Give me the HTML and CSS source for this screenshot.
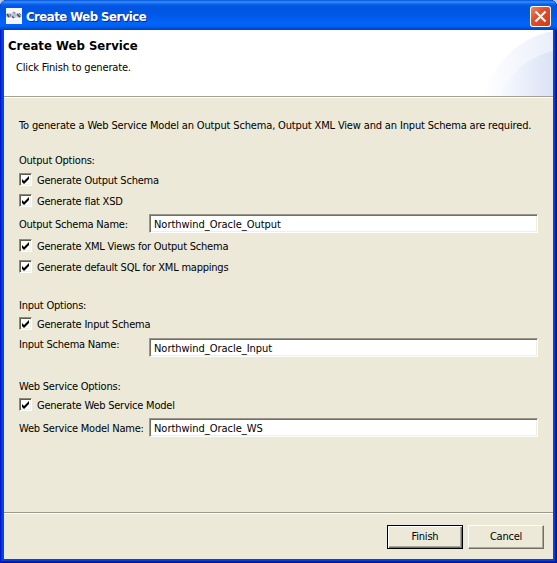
FILE: index.html
```
<!DOCTYPE html>
<html lang="en">
<head>
<meta charset="utf-8">
<title>Create Web Service</title>
<link rel="stylesheet" href="styles.css">
</head>
<body>
<div class="window">
  <div class="titlebar">
    <svg class="app-icon" width="16" height="16" viewBox="0 0 16 16">
      <rect width="16" height="16" fill="#f4f6fb"/>
      <ellipse cx="3" cy="7.500" rx="2.800" ry="2.200" fill="#aeb4c0"/>
      <ellipse cx="8" cy="7" rx="2.600" ry="3" fill="#bcc3d0"/>
      <ellipse cx="13" cy="7.500" rx="2.600" ry="2.200" fill="#aeb4c0"/>
      <path d="M1 6l2 3M6 8.500l2 1.500M11 6l3 3" stroke="#454e66" stroke-width="1.500"/>
      <path d="M7 4l2 1M4 6l1 2M13 5l2 2" stroke="#737e99"/>
    </svg>
    <span class="title">Create Web Service</span>
    <button class="close" aria-label="Close"><svg width="21" height="21" viewBox="0 0 21 21"><path d="M5.500 5.500l10 10M15.500 5.500l-10 10" stroke="#fff" stroke-width="2.200"/></svg></button>
  </div>
  <div class="client">
    <div class="banner">
      <div class="banner-text">
        <h1>Create Web Service</h1>
        <p>Click Finish to generate.</p>
      </div>
      <svg class="banner-art" width="75" height="66" viewBox="0 0 75 66">
        <defs>
          <linearGradient id="outer"><stop offset="0" stop-color="#fff"/><stop offset="1" stop-color="#e9eefa"/></linearGradient>
          <linearGradient id="inner"><stop offset="0" stop-color="#f8faff"/><stop offset="1" stop-color="#dae2f5"/></linearGradient>
        </defs>
        <path d="M5 66C15 34 40 8 75 1V66Z" fill="url(#outer)"/>
        <path d="M22 66C32 42 52 26 75 21V66Z" fill="url(#inner)"/>
      </svg>
    </div>
    <div class="form">
      <p class="message">To generate a Web Service Model an Output Schema, Output XML View and an Input Schema are required.</p>
      <div class="group">
        <h2>Output Options:</h2>
        <label class="check"><i class="box"><svg viewBox="0 0 7 7"><path d="M0 2v3l2 2 5-5V-1L2 4Z"/></svg></i><span>Generate Output Schema</span></label>
        <label class="check"><i class="box"><svg viewBox="0 0 7 7"><path d="M0 2v3l2 2 5-5V-1L2 4Z"/></svg></i><span>Generate flat XSD</span></label>
        <div class="field"><span class="name">Output Schema Name:</span><div class="input">Northwind_Oracle_Output</div></div>
        <label class="check tight"><i class="box"><svg viewBox="0 0 7 7"><path d="M0 2v3l2 2 5-5V-1L2 4Z"/></svg></i><span>Generate XML Views for Output Schema</span></label>
        <label class="check loose"><i class="box"><svg viewBox="0 0 7 7"><path d="M0 2v3l2 2 5-5V-1L2 4Z"/></svg></i><span>Generate default SQL for XML mappings</span></label>
      </div>
      <div class="group second">
        <h2>Input Options:</h2>
        <label class="check tight"><i class="box"><svg viewBox="0 0 7 7"><path d="M0 2v3l2 2 5-5V-1L2 4Z"/></svg></i><span>Generate Input Schema</span></label>
        <div class="field tall"><span class="name">Input Schema Name:</span><div class="input">Northwind_Oracle_Input</div></div>
      </div>
      <div class="group third">
        <h2>Web Service Options:</h2>
        <label class="check tight"><i class="box"><svg viewBox="0 0 7 7"><path d="M0 2v3l2 2 5-5V-1L2 4Z"/></svg></i><span>Generate Web Service Model</span></label>
        <div class="field last"><span class="name">Web Service Model Name:</span><div class="input">Northwind_Oracle_WS</div></div>
      </div>
    </div>
    <div class="footer">
      <button class="btn default">Finish</button>
      <button class="btn">Cancel</button>
    </div>
  </div>
</div>
</body>
</html>
```
FILE: styles.css
```
* { box-sizing: border-box; }
body {
  margin: 0;
  background: #b9c9ec;
  color: #000;
  font: 11px/14px "DejaVu Sans Condensed", "DejaVu Sans", sans-serif;
  letter-spacing: -0.22px;
  white-space: nowrap;
}
h1, h2, p { margin: 0; font-weight: normal; font-size: inherit; }
.window {
  width: 557px;
  height: 563px;
  display: flex;
  flex-direction: column;
  padding: 0 4px 4px;
  border-radius: 7px 7px 0 0;
  overflow: hidden;
  background: #0047dd;
  box-shadow: inset 1px 0 #0019cf, inset -1px 0 #00138c, inset 0 -1px #00138c, inset 2px 0 #0831d9, inset -2px 0 #001ea0, inset 0 -2px #001ea0, inset -3px 0 #0441d8, inset 0 -3px #0441d8;
}
.titlebar {
  flex: none;
  height: 30px;
  margin: 0 -4px;
  padding: 2px 6px 0;
  display: flex;
  align-items: center;
  background: linear-gradient(#0054d8 0, #3a8dfa 2px, #0a62ee 4px, #0055e0 7px, #0058e8 15px, #0065fb 23px, #0062f5 26px, #0040c0 30px);
}
.title {
  margin-left: 4px;
  padding-top: 2px;
  flex: 1;
  color: #fff;
  font-size: 13px;
  font-weight: bold;
  letter-spacing: -0.5px;
  text-shadow: 1px 1px #0a2a90;
}
.close {
  width: 21px;
  height: 21px;
  padding: 0;
  border: 0;
  border-radius: 3px;
  background: linear-gradient(135deg, #ee9272, #df5030 40%, #c93a12);
  box-shadow: inset 0 0 0 1px #fff;
}
.close svg { display: block; }
.client { flex: 1; display: flex; flex-direction: column; background: #ece9d8; }
.banner {
  height: 68px;
  display: flex;
  justify-content: space-between;
  background: #fff;
  border-bottom: 1px solid #fff;
  box-shadow: inset 0 -1px #a5a295;
}
.banner-text { padding: 8px 0 0 4px; }
.banner h1 { font-size: 13px; font-weight: bold; line-height: 16px; letter-spacing: 0.03px; }
.banner p { padding: 7px 0 0 8px; letter-spacing: -0.17px; }
.form { flex: 1; padding: 17px 15px 0; }
.message { height: 20px; line-height: 22px; letter-spacing: -0.155px; }
.group { margin-top: 16px; }
.group h2 { height: 18px; line-height: 20px; }
.second { margin-top: 18px; }
.third { margin-top: 15px; }
.check { display: flex; align-items: center; height: 21px; gap: 5px; }
.check span { padding-top: 2px; }
.check.tight { height: 19px; }
.check.loose { height: 23px; }
.box {
  width: 13px;
  height: 13px;
  padding: 1px;
  background: #fff;
  border: 1px solid;
  border-color: #8d8a7c #fff #fff #8d8a7c;
  box-shadow: inset 1px 1px #5f5d52, inset -1px -1px #f1efe2;
}
.box svg { display: block; width: 7px; height: 7px; margin: 2px 0 0 1px; overflow: visible; }
.field { display: flex; align-items: center; height: 25px; }
.field.tall { height: 29px; }
.name { width: 130px; padding-top: 2px; }
.field.tall .name { padding: 0 0 6px; }
.field.last { height: 27px; }
.input {
  width: 389px;
  height: 19px;
  padding: 2px 0 0 4px;
  line-height: 15px;
  letter-spacing: -0.03px;
  background: #fff;
  border: 1px solid;
  border-color: #99968a #fff #fff #99968a;
  box-shadow: inset 1px 1px #716f64, inset -1px -1px #f1efe2;
}
.footer {
  height: 47px;
  display: flex;
  justify-content: flex-end;
  gap: 5px;
  padding: 12px 9px 0 0;
  border-top: 1px solid #9c998c;
  box-shadow: inset 0 1px #fff;
}
.btn {
  width: 76px;
  height: 24px;
  padding: 0;
  font: inherit;
  letter-spacing: inherit;
  color: #000;
  background: #ece9d8;
  border: 1px solid;
  border-color: #fff #716f64 #716f64 #fff;
  box-shadow: inset -1px -1px #aca899;
}
.btn.default { border-color: #000; box-shadow: inset 1px 1px #fff, inset -1px -1px #716f64, inset -2px -2px #aca899; }
```
